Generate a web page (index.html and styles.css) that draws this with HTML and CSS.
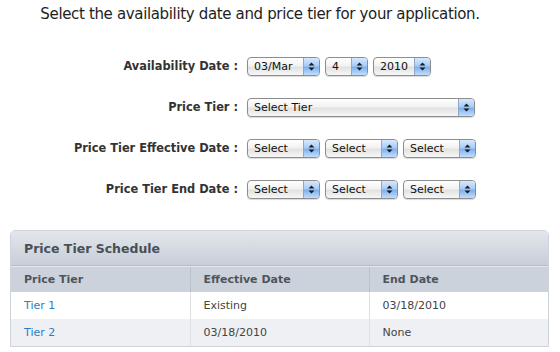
FILE: index.html
```html
<!DOCTYPE html>
<html lang="en">
<head>
  <meta charset="UTF-8" />
  <title>Availability and Pricing</title>
  <link rel="stylesheet" href="styles.css">
</head>
<body>

  <h1 class="title">Select the availability date and price tier for your application.</h1>

  <!-- Pricing form -->
  <div class="pricing-form">
    <label class="field-label">Availability Date :</label>
    <div class="controls">
      <div class="select w-month"><span class="value">03/Mar</span><span class="arrows"><svg width="7" height="9" viewBox="0 0 7 9"><path d="M3.5 0.5 L6.5 3.5 L0.5 3.5 Z M0.5 5.5 L6.5 5.5 L3.5 8.5 Z" fill="#1a1a1a"/></svg></span></div>
      <div class="select w-day"><span class="value">4</span><span class="arrows"><svg width="7" height="9" viewBox="0 0 7 9"><path d="M3.5 0.5 L6.5 3.5 L0.5 3.5 Z M0.5 5.5 L6.5 5.5 L3.5 8.5 Z" fill="#1a1a1a"/></svg></span></div>
      <div class="select w-year"><span class="value">2010</span><span class="arrows"><svg width="7" height="9" viewBox="0 0 7 9"><path d="M3.5 0.5 L6.5 3.5 L0.5 3.5 Z M0.5 5.5 L6.5 5.5 L3.5 8.5 Z" fill="#1a1a1a"/></svg></span></div>
    </div>

    <label class="field-label">Price Tier :</label>
    <div class="controls">
      <div class="select w-tier"><span class="value">Select Tier</span><span class="arrows"><svg width="7" height="9" viewBox="0 0 7 9"><path d="M3.5 0.5 L6.5 3.5 L0.5 3.5 Z M0.5 5.5 L6.5 5.5 L3.5 8.5 Z" fill="#1a1a1a"/></svg></span></div>
    </div>

    <label class="field-label">Price Tier Effective Date :</label>
    <div class="controls">
      <div class="select w-sel"><span class="value">Select</span><span class="arrows"><svg width="7" height="9" viewBox="0 0 7 9"><path d="M3.5 0.5 L6.5 3.5 L0.5 3.5 Z M0.5 5.5 L6.5 5.5 L3.5 8.5 Z" fill="#1a1a1a"/></svg></span></div>
      <div class="select w-sel"><span class="value">Select</span><span class="arrows"><svg width="7" height="9" viewBox="0 0 7 9"><path d="M3.5 0.5 L6.5 3.5 L0.5 3.5 Z M0.5 5.5 L6.5 5.5 L3.5 8.5 Z" fill="#1a1a1a"/></svg></span></div>
      <div class="select w-sel"><span class="value">Select</span><span class="arrows"><svg width="7" height="9" viewBox="0 0 7 9"><path d="M3.5 0.5 L6.5 3.5 L0.5 3.5 Z M0.5 5.5 L6.5 5.5 L3.5 8.5 Z" fill="#1a1a1a"/></svg></span></div>
    </div>

    <label class="field-label">Price Tier End Date :</label>
    <div class="controls">
      <div class="select w-sel"><span class="value">Select</span><span class="arrows"><svg width="7" height="9" viewBox="0 0 7 9"><path d="M3.5 0.5 L6.5 3.5 L0.5 3.5 Z M0.5 5.5 L6.5 5.5 L3.5 8.5 Z" fill="#1a1a1a"/></svg></span></div>
      <div class="select w-sel"><span class="value">Select</span><span class="arrows"><svg width="7" height="9" viewBox="0 0 7 9"><path d="M3.5 0.5 L6.5 3.5 L0.5 3.5 Z M0.5 5.5 L6.5 5.5 L3.5 8.5 Z" fill="#1a1a1a"/></svg></span></div>
      <div class="select w-sel"><span class="value">Select</span><span class="arrows"><svg width="7" height="9" viewBox="0 0 7 9"><path d="M3.5 0.5 L6.5 3.5 L0.5 3.5 Z M0.5 5.5 L6.5 5.5 L3.5 8.5 Z" fill="#1a1a1a"/></svg></span></div>
    </div>
  </div>

  <!-- Schedule table -->
  <div class="schedule">
    <div class="schedule-header">Price Tier Schedule</div>
    <table class="schedule-table">
      <thead>
        <tr>
          <th>Price Tier</th>
          <th>Effective Date</th>
          <th>End Date</th>
        </tr>
      </thead>
      <tbody>
        <tr>
          <td><a href="#">Tier 1</a></td>
          <td>Existing</td>
          <td>03/18/2010</td>
        </tr>
        <tr class="alt">
          <td><a href="#">Tier 2</a></td>
          <td>03/18/2010</td>
          <td>None</td>
        </tr>
      </tbody>
    </table>
  </div>

</body>
</html>
```

FILE: styles.css
```css
* {
  box-sizing: border-box;
}

body {
  margin: 0;
  font-family: 'DejaVu Sans', Verdana, sans-serif;
  background: #fff;
  color: #222;
}

.title {
  margin: 0;
  padding: 5px 40px 0 0;
  font-size: 15px;
  font-weight: normal;
  text-align: center;
  color: #1e1e1e;
  letter-spacing: -0.35px;
}

/* Form */
.pricing-form {
  display: grid;
  grid-template-columns: 238px auto;
  column-gap: 9px;
  row-gap: 22px;
  margin-top: 34px;
}

.field-label {
  text-align: right;
  font-size: 11.4px;
  font-weight: bold;
  color: #333;
  line-height: 19px;
}

.controls {
  display: flex;
  gap: 5px;
}

.select {
  height: 19px;
  display: flex;
  align-items: stretch;
  border: 1px solid #8d8d8d;
  border-radius: 4px;
  background: linear-gradient(#ffffff 0%, #f2f2f2 45%, #e2e2e2 55%, #f7f7f7 100%);
  box-shadow: 0 1px 1px rgba(0, 0, 0, 0.15);
  overflow: hidden;
  font-size: 11px;
  color: #111;
}

.select .value {
  flex: 1;
  padding-left: 6px;
  line-height: 17px;
  white-space: nowrap;
}

.select .arrows {
  width: 16px;
  display: flex;
  align-items: center;
  justify-content: center;
  border-left: 1px solid #8fa7c9;
  background: linear-gradient(#d6e8fc 0%, #a9cdf6 45%, #7fb1ee 55%, #c3defb 100%);
}

.w-month { width: 73px; }
.w-day { width: 43px; }
.w-year { width: 58px; }
.w-tier { width: 228px; }
.w-sel { width: 73px; }

/* Schedule */
.schedule {
  margin: 31px 11px 0 10px;
  border: 1px solid #cfd4db;
  border-radius: 5px 5px 0 0;
  overflow: hidden;
}

.schedule-header {
  height: 35px;
  line-height: 35px;
  padding-left: 13px;
  font-size: 12.5px;
  font-weight: bold;
  color: #4a4f57;
  background: linear-gradient(#e3e7ec, #c7ced8);
  border-bottom: 1px solid #b6bec9;
}

.schedule-table {
  width: 100%;
  border-collapse: collapse;
  font-size: 11px;
}

.schedule-table th {
  height: 25px;
  padding: 0 0 0 13px;
  text-align: left;
  font-weight: bold;
  color: #4f545b;
  background: #cbd2dc;
  border-top: 1px solid #e4e8ee;
  border-left: 1px solid #b9c1cc;
  width: 33.33%;
}

.schedule-table td {
  height: 27px;
  padding: 0 0 0 13px;
  color: #444;
  border-left: 1px solid #dde1e6;
  background: #fff;
}

.schedule-table th:first-child,
.schedule-table td:first-child {
  border-left: none;
}

.schedule-table tr.alt td {
  background: #eef0f3;
}

.schedule-table a {
  color: #2d7dc6;
  text-decoration: none;
}
```
